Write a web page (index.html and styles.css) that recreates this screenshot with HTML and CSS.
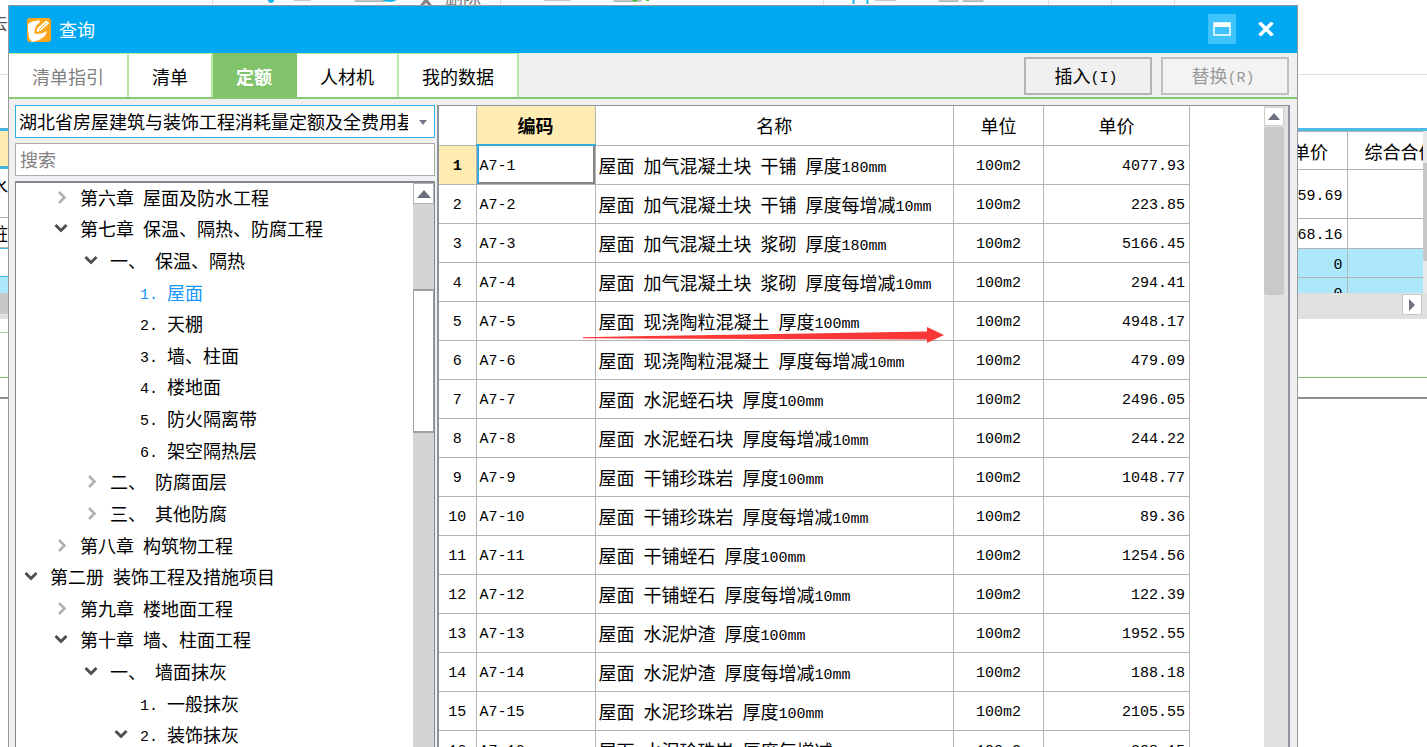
FILE: index.html
```html
<!DOCTYPE html>
<html lang="zh-CN">
<head>
<meta charset="utf-8">
<title>查询</title>
<link rel="stylesheet" href="styles.css">
</head>
<body>
<div class="app">
  <div class="app-toolbar">
    <svg class="toolbar-icons" width="1200" height="6" viewBox="0 0 1200 6" aria-hidden="true">
      <path d="M212.500 0V6M500.500 0V6M823.500 0V6M1048.500 0V6M1111.500 0V6M1174.500 0V6" stroke="#dcdcdc"/>
      <circle cx="271" cy="0" r="3" fill="#12b5ee"/>
      <path d="M294 0h17M544 0h27M875 0h21" stroke="#c8c8c8" stroke-width="2"/>
      <path d="M355 0h30v1.500h-30zM614 0h27v1.500h-27zM939 0h19v1.500h-19zM963 0h20v1.500h-20z" fill="#ddd" stroke="#b4b4b4"/>
      <path d="M382 0h15q-7 4-15 0z" fill="#12b5ee"/>
      <path d="M420 5l4-5h4l4 5h-4l-2-2-2 2z" fill="#888"/>
      <path d="M632 0h6l-3 2zM646 0h3v1h-3z" fill="#3fc22b"/>
      <path d="M853.500 0V4M867.500 0V4" stroke="#12b5ee" stroke-width="2"/>
      <text x="445" y="4" class="toolbar-label">删除</text>
    </svg>
    <span class="edge-label">去</span>
  </div>
  <div class="app-main">
    <div class="edge-left">
      <div class="edge-head"></div>
      <div class="edge-cell tall">水</div>
      <div class="edge-cell">桩</div>
      <div class="edge-cell blank"></div>
      <div class="edge-cell picked"></div>
      <div class="edge-scroll"></div>
      <div class="edge-gap"></div>
      <div class="edge-note"></div>
      <div class="edge-foot"></div>
    </div>
    <div class="sheet">
      <div class="sheet-view">
        <div class="sheet-clip">
          <table class="sheet-table">
            <thead><tr><th class="price">单价</th><th class="total">综合合价</th></tr></thead>
            <tbody>
              <tr class="tall"><td>59.69</td><td></td></tr>
              <tr class="mid"><td>68.16</td><td></td></tr>
              <tr class="picked"><td>0</td><td></td></tr>
              <tr class="picked"><td>0</td><td></td></tr>
            </tbody>
          </table>
        </div>
        <div class="sheet-vbar"><i></i></div>
      </div>
      <div class="sheet-hbar">
        <button type="button" aria-label="向右滚动"><svg width="8" height="12" viewBox="0 0 8 12"><path d="M1 0l6 6-6 6z" fill="#6e7280"/></svg></button>
      </div>
      <div class="sheet-gap"></div>
      <div class="edge-foot"></div>
    </div>
  </div>
</div>

<section class="dialog" role="dialog" aria-label="查询">
  <header class="titlebar">
    <svg class="logo" width="24" height="24" viewBox="0 0 24 24" aria-hidden="true">
      <rect width="24" height="24" rx="3" fill="#fba51c"/>
      <path d="M1 6q3-3 8-3l3-1 1 2-4 4-2 7 3 1 6-1 4-2-2 5-6 4-7 2-3-4-1-8z" fill="#fff"/>
      <path d="M9 15l1-5 9-8 4 3-9 8z" fill="#fff" stroke="#fba51c"/>
      <path d="M12 12l7-7" stroke="#fba51c"/>
    </svg>
    <h1>查询</h1>
    <button type="button" class="win max" aria-label="最大化"><svg width="18" height="14" viewBox="0 0 18 14"><path d="M1 1h16v12H1z" fill="none" stroke="#fff" stroke-width="1.500"/><path d="M1 1h16v4H1z" fill="#fff"/></svg></button>
    <button type="button" class="win" aria-label="关闭"><svg width="18" height="14" viewBox="0 0 18 14"><path d="M2.500 0.500l13 13M15.500 0.500l-13 13" stroke="#fff" stroke-width="3.500"/></svg></button>
  </header>

  <nav class="tabs">
    <button type="button" class="tab dim">清单指引</button>
    <button type="button" class="tab">清单</button>
    <button type="button" class="tab active">定额</button>
    <button type="button" class="tab">人材机</button>
    <button type="button" class="tab">我的数据</button>
    <div class="actions">
      <button type="button" class="action"><span class="cjk">插入</span>(I)</button>
      <button type="button" class="action" disabled><span class="cjk">替换</span>(R)</button>
    </div>
  </nav>

  <div class="body">
    <aside class="side">
      <div class="combo">
        <select aria-label="定额库"><option>湖北省房屋建筑与装饰工程消耗量定额及全费用基期价表</option></select>
        <svg width="8" height="5" viewBox="0 0 8 5" aria-hidden="true"><path d="M0 0h8L4 5z" fill="#727986"/></svg>
      </div>
      <input class="search" type="text" placeholder="搜索" aria-label="搜索">
      <div class="tree">
        <ul class="nodes" id="tree"></ul>
        <div class="tree-bar">
          <button type="button" aria-label="向上滚动"><svg width="14" height="8" viewBox="0 0 14 8"><path d="M7 0l7 8H0z" fill="#6b7080"/></svg></button>
          <div class="tree-thumb"></div>
        </div>
      </div>
    </aside>

    <main class="grid">
      <div class="grid-view">
        <table class="quota">
          <colgroup><col class="c-no"><col class="c-code"><col><col class="c-unit"><col class="c-price"></colgroup>
          <thead><tr><th></th><th class="current">编码</th><th>名称</th><th>单位</th><th>单价</th></tr></thead>
          <tbody id="rows"></tbody>
        </table>
      </div>
      <div class="grid-bar">
        <button type="button" aria-label="向上滚动"><svg width="12" height="7" viewBox="0 0 12 7"><path d="M6 0l6 7H0z" fill="#6e7280"/></svg></button>
        <div class="grid-thumb"></div>
      </div>
    </main>
  </div>
</section>

<svg class="arrow" width="362" height="18" viewBox="0 0 362 18" aria-hidden="true">
  <path d="M0 10.300L50 9.300 344 4.500V0L361 8 344 16V12.500L46 11.500 0 11.200z" fill="#fb3838"/>
</svg>
<script src="app.js"></script>
</body>
</html>
```

FILE: styles.css
```css
* { box-sizing: border-box; }

html, body { height: 100%; }

body {
  margin: 0;
  overflow: hidden;
  position: relative;
  background: #fff;
  color: #000;
  font-family: "Liberation Mono", "Noto Sans CJK SC", monospace;
  font-size: 15px;
}

button, input, select { font: inherit; color: inherit; margin: 0; }
button { padding: 0; }
svg { display: block; }

.cjk, h1, th, .tab, .search, .combo select, .edge-label, .edge-cell {
  font-family: "Noto Sans CJK SC", sans-serif;
  font-size: 18px;
}
.cjk { vertical-align: -1px; }

/* application behind the dialog */
.app-toolbar { height: 75px; border-bottom: 1px solid #dedede; overflow: hidden; }
.toolbar-label { font-family: "Noto Sans CJK SC", sans-serif; font-size: 18px; fill: #777; }
.edge-label {
  display: flex;
  justify-content: flex-end;
  width: 8px;
  line-height: 32px;
  color: #555;
}
.app-main { display: flex; justify-content: space-between; padding-top: 53px; }

.edge-left { width: 8px; overflow: hidden; }
.edge-head { height: 41px; background: #ffecb3; border-top: 3px solid #45b4e0; border-bottom: 3px solid #45b4e0; }
.edge-cell { display: flex; justify-content: flex-end; height: 30px; line-height: 30px; border-bottom: 1px solid #b4b4b4; }
.edge-cell.tall { height: 49px; line-height: 32px; }
.edge-cell.blank { height: 29px; border-top: 1px solid #45b4e0; border-bottom-color: #45b4e0; }
.edge-cell.picked { height: 16px; background: #ade8fa; border: 0; }
.edge-scroll { height: 26px; background: #c8c8c8; border-bottom: 5px solid #e0e0e0; }
.edge-gap { height: 14px; border-bottom: 1px solid #9fdc91; }
.edge-note { height: 45px; border-bottom: 1px solid #7cc46c; }
.edge-foot { height: 21px; border-bottom: 2px solid #909090; }

.sheet { width: 140px; }
.sheet-view { display: flex; height: 165px; border-top: 3px solid #4fbae6; }
.sheet-clip { flex: 1; overflow: hidden; }
.sheet-table { width: 160px; table-layout: fixed; border-collapse: collapse; }
.sheet-table th { height: 38px; padding: 0; font-weight: 400; line-height: 28px; border: 1px solid #b4b4b4; white-space: nowrap; overflow: hidden; text-align: left; }
.sheet-table .price { width: 60px; padding-left: 5px; }
.sheet-table .total { padding-left: 17px; }
.sheet-table td { height: 29px; padding: 4px 4px 0 0; border: 1px solid #b4b4b4; text-align: right; }
.sheet-table td:first-child, .sheet-table th:first-child { border-left: 0; }
.sheet-table .tall td { height: 49px; }
.sheet-table .mid td { height: 30px; }
.sheet-table .picked td { background: #ade8fa; }
.sheet-vbar { width: 4px; padding-top: 32px; background: #e8e8e8; }
.sheet-vbar i { display: block; height: 98px; background: #c8c8c8; }
.sheet-hbar { display: flex; justify-content: flex-end; height: 26px; padding: 1px 5px 4px; background: #e0e0e0; }
.sheet-hbar button { display: grid; place-items: center; width: 20px; height: 21px; background: #fff; border: 1px solid #c8c8c8; }
.sheet-gap { height: 59px; border-bottom: 1px solid #7cc46c; }

/* dialog window */
.dialog {
  position: absolute;
  top: 5px;
  left: 8px;
  right: 129px;
  bottom: -6px;
  display: flex;
  flex-direction: column;
  background: #f0f0f0;
  border: 1px solid #9a9a9a;
}

.titlebar { display: flex; align-items: center; height: 47px; padding: 0 17px 0 18px; background: #00a8f2; color: #fff; }
.titlebar h1 { flex: 1; margin: 0 0 2px 8px; font-weight: 400; line-height: 28px; }
.win { display: grid; place-items: center; width: 28px; height: 30px; margin: 0 0 2px 16px; background: none; border: 0; }
.win.max { background: #40c2fb; }

.tabs { display: flex; height: 46px; border-bottom: 2px solid #84c873; }
.tab { padding: 0 23px; background: #fff; border: solid #b8eca6; border-width: 1px 2px 0 0; line-height: 44px; white-space: nowrap; }
.tab.dim { color: #808080; }
.tab.active { background: #80c36a; border-color: #80c36a; color: #fff; font-weight: 700; }
.actions { display: flex; gap: 9px; margin-left: auto; padding: 4px 8px 2px 0; }
.action { width: 128px; padding: 0 4px 2px 0; background: #f0f0f0; border: 2px solid #b4b4b4; color: #000; }
.action:disabled { background: #f3f3f3; color: #999; border-color: #c0c0c0; }

.body { flex: 1; display: flex; gap: 2px; min-height: 0; padding: 6px 7px 0 6px; }

.side { display: flex; flex-direction: column; gap: 5px; width: 420px; }
.combo { position: relative; height: 33px; }
.combo select {
  appearance: none;
  width: 100%;
  height: 100%;
  padding: 0 26px 2px 3px;
  background: #fff;
  border: 1px solid #2fb0e2;
  border-radius: 0;
}
.combo svg { position: absolute; top: 15px; right: 8px; }
.search { height: 33px; padding: 0 4px 2px; background: #fff; border: 1px solid #adadad; outline: 0; }
.search::placeholder { color: #808080; }

.tree { flex: 1; display: flex; min-height: 0; background: #fff; border: solid #828790; border-width: 2px 1px 0 1px; }
.nodes { flex: 1; display: flex; flex-direction: column; margin: 0; padding: 0; list-style: none; }
.node { flex: 1; display: flex; align-items: center; gap: 11px; min-height: 0; white-space: pre; line-height: 28px; }
.node svg { flex: none; width: 16px; margin-bottom: 3px; }
.node.selected { color: #1496fc; }
.depth-0 { padding-left: 7px; }
.depth-1 { padding-left: 37px; }
.depth-2 { padding-left: 67px; }
.depth-3 { padding-left: 97px; }

.tree-bar { width: 21px; background: #d4d4d4; }
.tree-bar button { display: grid; place-items: center; width: 100%; height: 21px; background: #fff; border: 1px solid #b4b4b4; }
.tree-thumb { height: 144px; margin-top: 85px; background: #fff; border: solid #a0a0a0; border-width: 2px 1px; }

.grid { flex: 1; display: flex; min-width: 0; background: #fff; border: 2px solid #8d939f; border-bottom: 0; border-top-width: 1px; }
.grid-view { flex: 1; overflow: hidden; padding-right: 74px; }
.quota { width: 100%; table-layout: fixed; border-collapse: collapse; }
.c-no { width: 37px; }
.c-code { width: 119px; }
.c-unit { width: 90px; }
.c-price { width: 146px; }
.quota th, .quota td { height: 39px; padding: 0 3px; border: 1px solid #b4b4b4; line-height: 28px; white-space: pre; overflow: hidden; }
.quota th { font-weight: 400; }
.quota tbody th, .quota tbody td { padding-top: 4px; }
.quota tr > :first-child { border-left: 0; text-align: center; }
.quota thead th { border-top: 0; text-align: center; }
.quota thead .current { background: #ffecb3; font-weight: 700; border-bottom: 2px solid #35a9d8; }
.quota tbody th { font: inherit; line-height: 28px; }
.quota .unit { text-align: center; }
.quota .price { padding-right: 4px; text-align: right; }
.quota .current th { background: #ffecb3; font-weight: 700; }
.quota .current .code { box-shadow: inset 2px 0 #35a9d8, inset -2px -2px #858585; }

.grid-bar { display: flex; flex-direction: column; gap: 1px; width: 24px; padding: 1px 4px 0 0; background: #e1e1e1; }
.grid-bar button { display: grid; place-items: center; height: 19px; background: #fff; border: 1px solid #d0d0d0; }
.grid-thumb { height: 168px; background: #c9c9c9; border-radius: 3px; }

/* annotation drawn across the rows */
.arrow { position: absolute; top: 327px; left: 583px; }
```

FILE: app.js
```js
const nodes = [
  [1, "closed", "第六章 屋面及防水工程"],
  [1, "open", "第七章 保温、隔热、防腐工程"],
  [2, "open", "一、 保温、隔热"],
  [3, "leaf", "1. 屋面", true],
  [3, "leaf", "2. 天棚"],
  [3, "leaf", "3. 墙、柱面"],
  [3, "leaf", "4. 楼地面"],
  [3, "leaf", "5. 防火隔离带"],
  [3, "leaf", "6. 架空隔热层"],
  [2, "closed", "二、 防腐面层"],
  [2, "closed", "三、 其他防腐"],
  [1, "closed", "第八章 构筑物工程"],
  [0, "open", "第二册 装饰工程及措施项目"],
  [1, "closed", "第九章 楼地面工程"],
  [1, "open", "第十章 墙、柱面工程"],
  [2, "open", "一、 墙面抹灰"],
  [3, "leaf", "1. 一般抹灰"],
  [3, "open", "2. 装饰抹灰"]
];

const rows = [
  ["屋面 加气混凝土块 干铺 厚度180mm", "4077.93"],
  ["屋面 加气混凝土块 干铺 厚度每增减10mm", "223.85"],
  ["屋面 加气混凝土块 浆砌 厚度180mm", "5166.45"],
  ["屋面 加气混凝土块 浆砌 厚度每增减10mm", "294.41"],
  ["屋面 现浇陶粒混凝土 厚度100mm", "4948.17"],
  ["屋面 现浇陶粒混凝土 厚度每增减10mm", "479.09"],
  ["屋面 水泥蛭石块 厚度100mm", "2496.05"],
  ["屋面 水泥蛭石块 厚度每增减10mm", "244.22"],
  ["屋面 干铺珍珠岩 厚度100mm", "1048.77"],
  ["屋面 干铺珍珠岩 厚度每增减10mm", "89.36"],
  ["屋面 干铺蛭石 厚度100mm", "1254.56"],
  ["屋面 干铺蛭石 厚度每增减10mm", "122.39"],
  ["屋面 水泥炉渣 厚度100mm", "1952.55"],
  ["屋面 水泥炉渣 厚度每增减10mm", "188.18"],
  ["屋面 水泥珍珠岩 厚度100mm", "2105.55"],
  ["屋面 水泥珍珠岩 厚度每增减10mm", "208.15"]
];

const paths = {
  open: '<path d="M2.500 3l5.500 5.500L13.500 3" fill="none" stroke="#505050" stroke-width="3"/>',
  closed: '<path d="M6 1l5.500 5.500L6 12" fill="none" stroke="#b0b0b0" stroke-width="2.500"/>',
  leaf: ""
};

// Chinese runs are set larger than the monospaced Latin, two columns per character.
const mixed = text => text.replace(/[\u3000-\u9fff]+/g, run => `<span class="cjk">${run}</span>`);

document.getElementById("tree").innerHTML = nodes.map(([depth, state, text, selected]) =>
  `<li class="node depth-${depth}${selected ? " selected" : ""}"><svg width="16" height="13" viewBox="0 0 16 13" aria-hidden="true">${paths[state]}</svg><span>${mixed(text)}</span></li>`
).join("");

document.getElementById("rows").innerHTML = rows.map(([name, price], i) =>
  `<tr${i === 0 ? ' class="current"' : ""}><th>${i + 1}</th><td class="code">A7-${i + 1}</td><td>${mixed(name)}</td><td class="unit">100m2</td><td class="price">${price}</td></tr>`
).join("");
```
